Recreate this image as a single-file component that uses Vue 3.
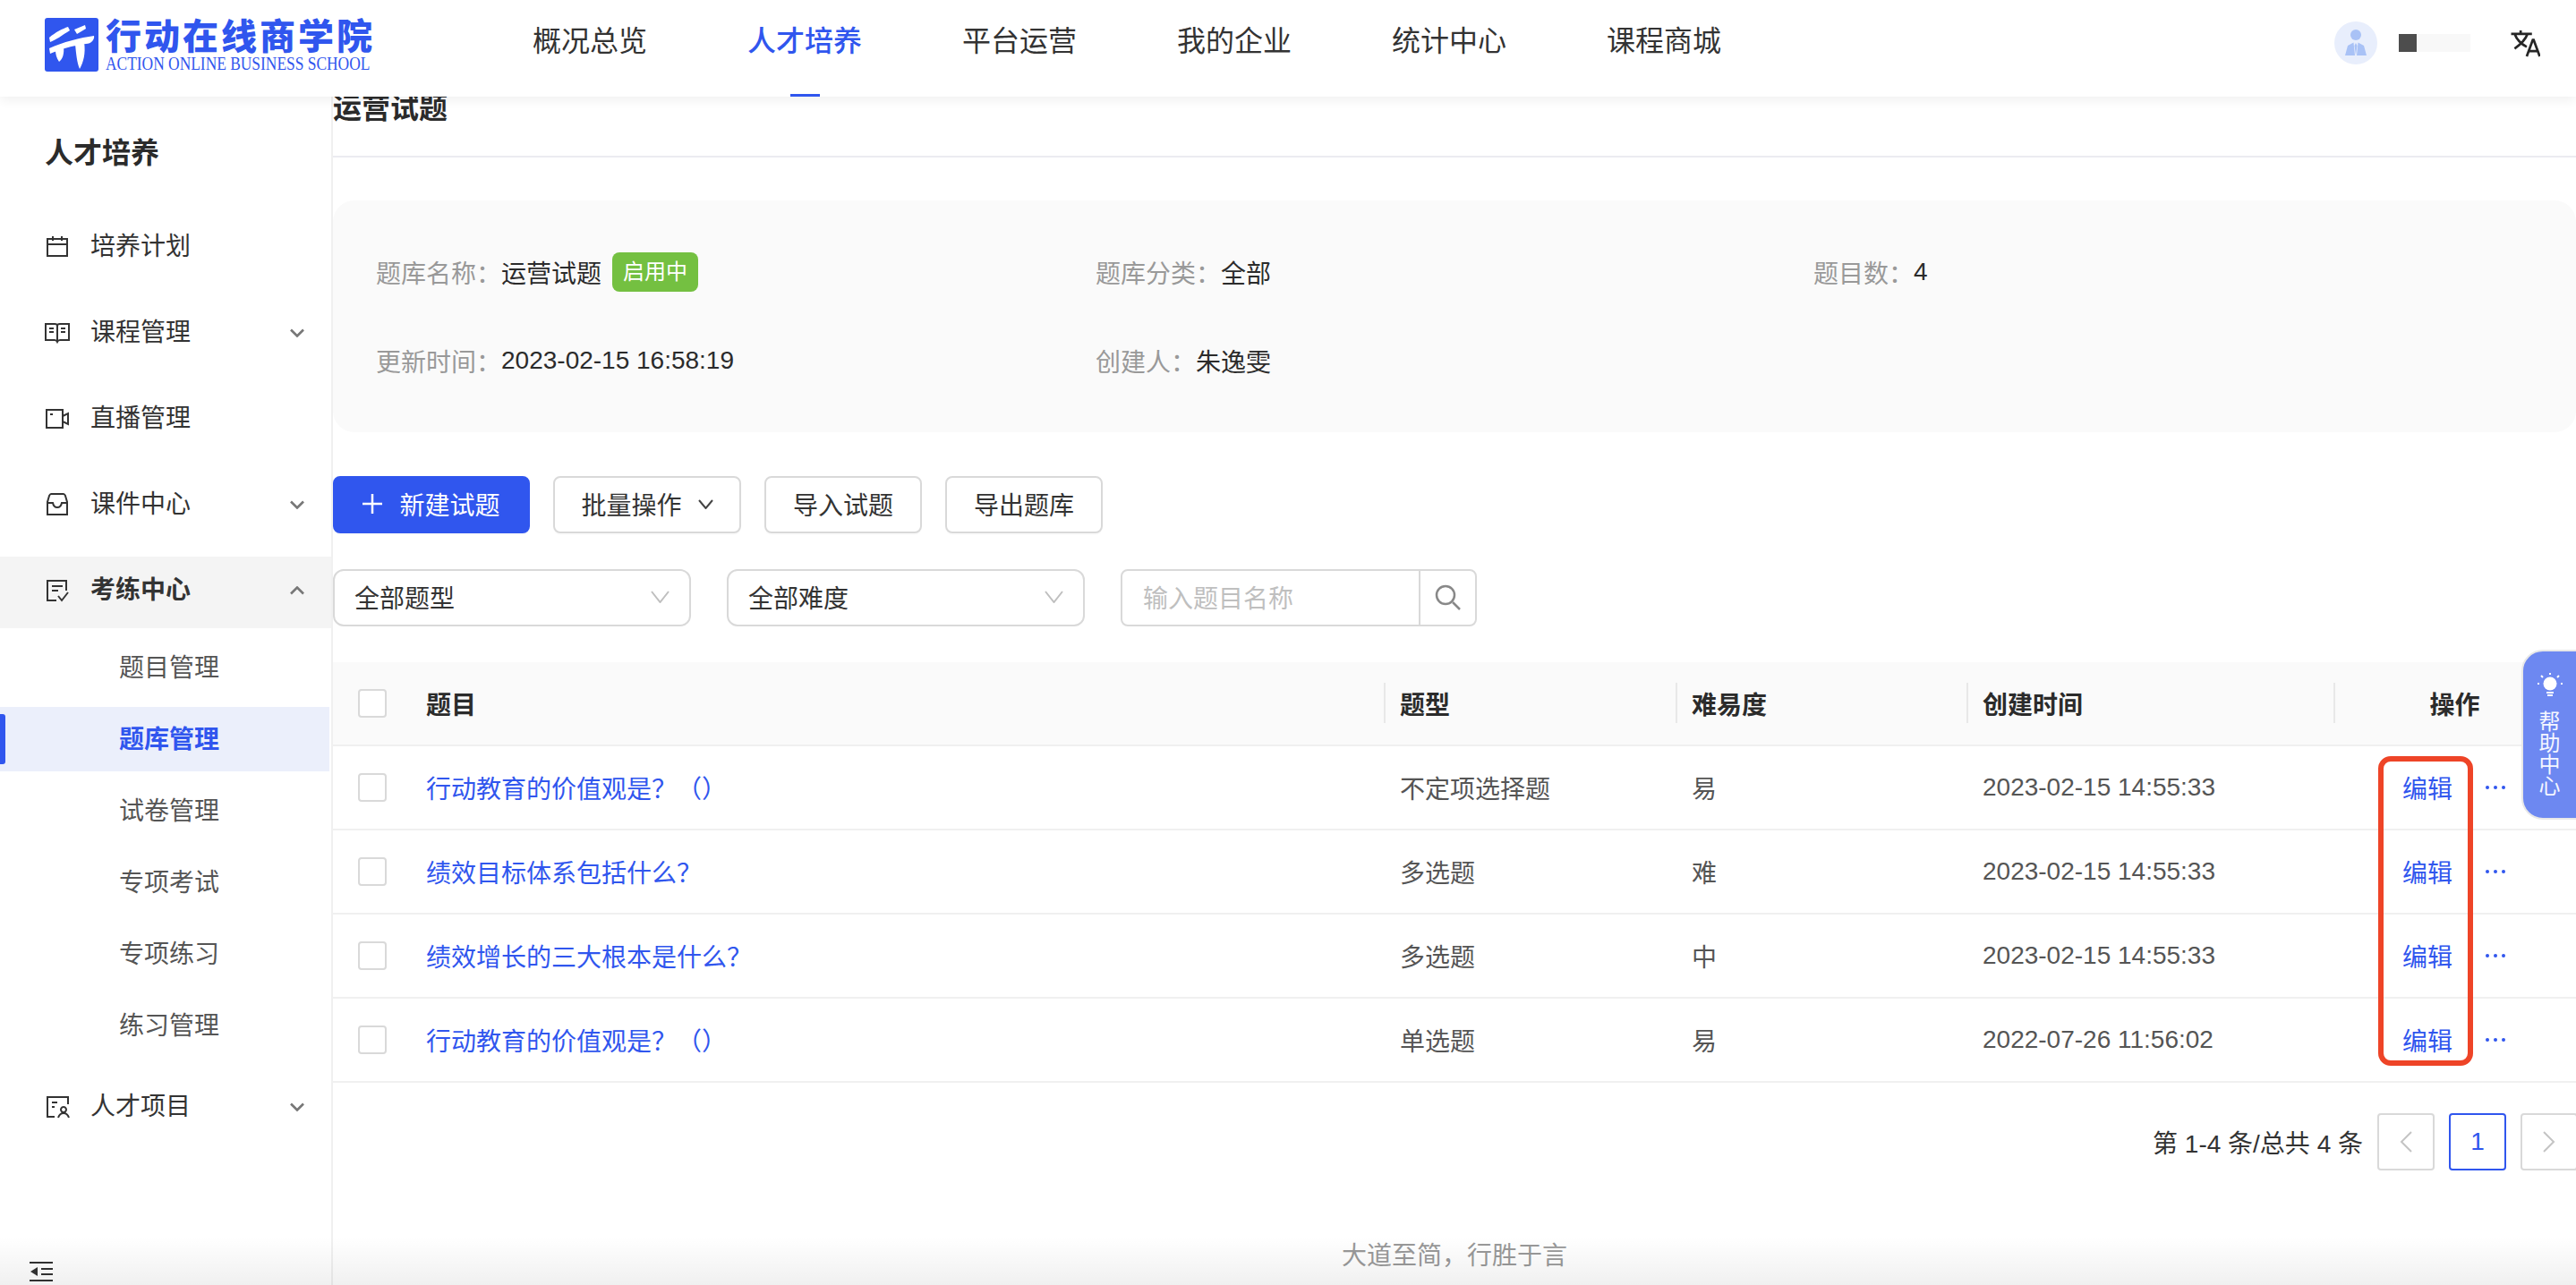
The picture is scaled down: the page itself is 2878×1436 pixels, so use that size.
<script setup>
const navItems = ['概况总览', '人才培养', '平台运营', '我的企业', '统计中心', '课程商城']

const icons = {
  calendar: 'M3 5h22v19H3zM3 11h22M9 2v5M19 2v5',
  book: 'M1 4h10q3 0 3 2q0-2 3-2h10v18H17q-2 0-3 2q-1-2-3-2H1zM14 6v17M5 9h5M5 13h5M18 9h5M18 13h5',
  video: 'M2 4h18v20H2zM20 11l6-3v12l-6-3M6 9h3',
  inbox: 'M7 2h14q1 0 2 2l2 7v14H3V11l2-7q1-2 2-2zM3 12h6q1 5 5 5t5-5h6',
  exam: 'M24 14V3H3v22h10M8 9h12M8 14h7M15 20l4 5 7-9',
  project: 'M26 11V3H3v22h8M8 9h6M8 14h3M15 26c1-3 3-5 6-5s5 2 6 5M21 14a3 3 0 1 0 .01 0z'
}

const menuTop = [
  { label: '培养计划', icon: 'calendar' },
  { label: '课程管理', icon: 'book', arrow: 'down' },
  { label: '直播管理', icon: 'video' },
  { label: '课件中心', icon: 'inbox', arrow: 'down' }
]
const subMenu = ['题目管理', '题库管理', '试卷管理', '专项考试', '专项练习', '练习管理']

const rows = [
  { title: '行动教育的价值观是？（）', type: '不定项选择题', level: '易', time: '2023-02-15 14:55:33' },
  { title: '绩效目标体系包括什么？', type: '多选题', level: '难', time: '2023-02-15 14:55:33' },
  { title: '绩效增长的三大根本是什么？', type: '多选题', level: '中', time: '2023-02-15 14:55:33' },
  { title: '行动教育的价值观是？（）', type: '单选题', level: '易', time: '2022-07-26 11:56:02' }
]
</script>

<template>
  <div class="page">
    <header class="header">
      <div class="logo">
        <svg class="logo-mark" viewBox="0 0 60 60">
          <rect width="60" height="60" rx="3" fill="#3056ee" />
          <path fill="#fff" d="M5 22C12 16 20 12 26 10L28 14C20 19 12 25 6 27ZM33 13L45 8L46 12L36 18ZM5 34C20 27 40 22 55 20C56 24 52 29 46 29C30 31 15 36 6 40ZM12 36L21 32C22 40 20 46 16 49C13 45 12 40 12 36ZM34 29L44 27C46 40 43 50 39 57C36 50 35 40 34 29Z" />
        </svg>
        <div class="logo-text">
          <div class="logo-cn">行动在线商学院</div>
          <div class="logo-en">ACTION ONLINE BUSINESS SCHOOL</div>
        </div>
      </div>
      <nav class="nav">
        <a v-for="item in navItems" :key="item" class="nav-item" :class="{ active: item === '人才培养' }">{{ item }}</a>
      </nav>
      <div class="user">
        <svg class="avatar" viewBox="0 0 48 48">
          <circle cx="24" cy="24" r="24" fill="#e8eefc" />
          <circle cx="24" cy="15" r="6" fill="#a9c2f6" />
          <path fill="#a9c2f6" d="M12 38L15 27L21.500 23.500L23 38ZM36 38L33 27L26.500 23.500L25 38Z" />
          <path fill="#a9c2f6" d="M24 24l1.500 3-1.500 11-1.500-11z" />
        </svg>
        <div class="name"><span class="name-mask"></span></div>
        <svg class="lang" viewBox="1 0 33 32">
          <path class="lang-line" d="M1 5h24M12 1v4M5 5c3 8 8 12 14 15M20 5c-3 8-9 13-15 17M19 31l7-19h1l7 19M21.500 25h10" />
        </svg>
      </div>
    </header>

    <div class="body">
      <aside class="side">
        <h2 class="side-title">人才培养</h2>
        <div v-for="item in menuTop" :key="item.label" class="menu-item">
          <svg class="menu-icon" viewBox="0 0 28 28"><path :d="icons[item.icon]" /></svg>
          <span class="menu-label">{{ item.label }}</span>
          <svg v-if="item.arrow" class="menu-arrow" viewBox="0 0 16 10"><path d="M1 1.500l7 7 7-7" /></svg>
        </div>
        <div class="menu-item open">
          <svg class="menu-icon" viewBox="0 0 28 28"><path :d="icons.exam" /></svg>
          <span class="menu-label">考练中心</span>
          <svg class="menu-arrow" viewBox="0 0 16 10"><path d="M1 8.500l7-7 7 7" /></svg>
        </div>
        <div class="sub-list">
          <div v-for="item in subMenu" :key="item" class="sub-item" :class="{ active: item === '题库管理' }">{{ item }}</div>
        </div>
        <div class="menu-item last">
          <svg class="menu-icon" viewBox="0 0 28 28"><path :d="icons.project" /></svg>
          <span class="menu-label">人才项目</span>
          <svg class="menu-arrow" viewBox="0 0 16 10"><path d="M1 1.500l7 7 7-7" /></svg>
        </div>
        <svg class="collapse" viewBox="0 0 26 24">
          <path class="collapse-line" d="M0 2h26M13 9h13M13 15h13M0 22h26" />
          <path class="collapse-tri" d="M9 7v10l-8-5z" />
        </svg>
      </aside>

      <main class="main">
        <h1 class="title">运营试题</h1>

        <section class="info">
          <div class="info-cell">
            <span class="info-label">题库名称：</span><span>运营试题</span><span class="tag">启用中</span>
          </div>
          <div class="info-cell"><span class="info-label">题库分类：</span><span>全部</span></div>
          <div class="info-cell"><span class="info-label">题目数：</span><span>4</span></div>
          <div class="info-cell"><span class="info-label">更新时间：</span><span>2023-02-15 16:58:19</span></div>
          <div class="info-cell"><span class="info-label">创建人：</span><span>朱逸雯</span></div>
        </section>

        <div class="actions">
          <button class="btn primary">
            <svg class="plus" viewBox="0 0 22 22"><path d="M11 0v22M0 11h22" /></svg>
            <span>新建试题</span>
          </button>
          <button class="btn batch">
            <span>批量操作</span>
            <svg class="btn-arrow" viewBox="0 0 17 11"><path d="M1 1l7.500 9L16 1" /></svg>
          </button>
          <button class="btn">导入试题</button>
          <button class="btn">导出题库</button>
        </div>

        <div class="filters">
          <div class="select">
            <span>全部题型</span>
            <svg class="select-arrow" viewBox="0 0 21 14"><path d="M1 1l9.500 12L20 1" /></svg>
          </div>
          <div class="select">
            <span>全部难度</span>
            <svg class="select-arrow" viewBox="0 0 21 14"><path d="M1 1l9.500 12L20 1" /></svg>
          </div>
          <div class="search">
            <span class="search-input">输入题目名称</span>
            <span class="search-btn">
              <svg class="search-icon" viewBox="0 0 30 30"><path d="M24 25 L16 17" transform="translate(4 3)" /><circle cx="12" cy="12" r="10" /></svg>
            </span>
          </div>
        </div>

        <div class="table">
          <div class="tr th">
            <div class="cell"><span class="check"></span></div>
            <div class="cell">题目</div>
            <div class="cell sep">题型</div>
            <div class="cell sep wide">难易度</div>
            <div class="cell sep">创建时间</div>
            <div class="cell sep zero center">操作</div>
          </div>
          <div v-for="(row, i) in rows" :key="i" class="tr">
            <div class="cell"><span class="check"></span></div>
            <div class="cell link">{{ row.title }}</div>
            <div class="cell muted">{{ row.type }}</div>
            <div class="cell muted">{{ row.level }}</div>
            <div class="cell muted">{{ row.time }}</div>
            <div class="cell ops">
              <span class="link">编辑</span>
              <span class="dots"><i></i><i></i><i></i></span>
            </div>
          </div>
          <div class="mark"></div>
        </div>

        <div class="pager">
          <span class="pager-text">第 1-4 条/总共 4 条</span>
          <span class="page-btn"><svg viewBox="0 0 14 24"><path d="M13 1L2 12l11 11" /></svg></span>
          <span class="page-btn current">1</span>
          <span class="page-btn"><svg viewBox="0 0 14 24"><path d="M1 1l11 11L1 23" /></svg></span>
        </div>

        <footer class="foot">大道至简，行胜于言</footer>
      </main>
    </div>

    <div class="help">
      <svg class="bulb" viewBox="0 0 28 30">
        <circle class="bulb-core" cx="14" cy="12" r="7.500" />
        <path class="bulb-line" d="M10 22h8M11 25h6M14 0v2M4 3l2 2M24 3l-2 2M0 12h2M26 12h2" />
      </svg>
      <span class="help-text">帮助中心</span>
    </div>
    <div class="fade"></div>
  </div>
</template>

<style>
html, body { margin: 0; padding: 0; background: #fff; }
</style>

<style scoped>
.page {
  position: relative;
  width: 2878px;
  height: 1436px;
  overflow: hidden;
  background: #fff;
  color: #333;
  font-family: "Liberation Sans", "Noto Sans CJK SC", sans-serif;
  font-size: 28px;
}

.header {
  position: relative;
  z-index: 5;
  display: flex;
  align-items: center;
  box-sizing: border-box;
  height: 108px;
  padding: 0 40px 12px 50px;
  background: #fff;
  box-shadow: 0 3px 12px rgba(0, 0, 0, 0.07);
}
.logo { display: flex; gap: 8px; margin-top: 4px; }
.logo-mark { display: block; width: 60px; height: 60px; }
.logo-text { width: 298px; white-space: nowrap; }
.logo-cn {
  font-size: 40px;
  line-height: 42px;
  letter-spacing: 3px;
  font-weight: 900;
  color: #3056ee;
}
.logo-en {
  margin-top: -1px;
  font-family: "Liberation Serif", serif;
  font-size: 20px;
  line-height: 20px;
  color: #3056ee;
  transform: scaleX(0.87);
  transform-origin: left center;
}
.nav { display: flex; gap: 112px; margin: -4px 0 0 179px; }
.nav-item { position: relative; font-size: 32px; line-height: 44px; color: #333; }
.nav-item.active { color: #3056ee; font-weight: 500; }
.nav-item.active::after {
  content: "";
  position: absolute;
  left: 48px;
  top: 81px;
  width: 33px;
  height: 3px;
  background: #3056ee;
}
.user { display: flex; align-items: center; margin-left: auto; }
.avatar { width: 48px; height: 48px; }
.name { width: 80px; height: 20px; margin: 0 45px 0 24px; background: #f8f8f8; }
.name-mask { display: block; width: 20px; height: 20px; background: #4d4d4d; }
.lang { width: 33px; height: 31px; }
.lang-line { fill: none; stroke: #262626; stroke-width: 2.800; }

.body { display: flex; height: 1328px; }
.side {
  display: flex;
  flex-direction: column;
  flex: none;
  box-sizing: border-box;
  width: 372px;
  height: 1328px;
  border-right: 2px solid #f0f0f0;
}
.side-title {
  margin: 0;
  padding: 43px 0 45px 50px;
  font-size: 32px;
  line-height: 40px;
  font-weight: 700;
  color: #2b2b2b;
}
.menu-item {
  display: flex;
  align-items: center;
  flex: none;
  box-sizing: border-box;
  height: 80px;
  margin-bottom: 16px;
  padding: 0 30px 0 50px;
  color: #333;
}
.menu-item.open {
  margin: 2px 0 0;
  padding-bottom: 5px;
  background: #f4f4f4;
  font-weight: 700;
}
.menu-item.last { margin: 15px 0 0; }
.menu-icon { flex: none; width: 28px; height: 28px; margin-right: 23px; }
.menu-icon path { fill: none; stroke: #333; stroke-width: 2; }
.menu-label { flex: 1; line-height: 40px; }
.menu-arrow { flex: none; width: 16px; height: 10px; }
.menu-arrow path { fill: none; stroke: #777; stroke-width: 2.600; }
.sub-list { display: flex; flex-direction: column; gap: 8px; margin-top: 8px; }
.sub-item {
  position: relative;
  box-sizing: border-box;
  width: 368px;
  height: 72px;
  padding-left: 133px;
  line-height: 73px;
  color: #555;
}
.sub-item.active { background: #ebeffb; color: #3056ee; font-weight: 700; }
.sub-item.active::before {
  content: "";
  position: absolute;
  left: 0;
  top: 8px;
  width: 6px;
  height: 56px;
  border-radius: 0 3px 3px 0;
  background: #3056ee;
}
.collapse { flex: none; width: 26px; height: 24px; margin: auto 0 3px 33px; }
.collapse-line { fill: none; stroke: #333; stroke-width: 2.200; }
.collapse-tri { fill: #333; }

.main { flex: 1; min-width: 0; }
.title {
  box-sizing: border-box;
  height: 71px;
  margin: -3px 0 0;
  border-bottom: 2px solid #ebebf1;
  font-size: 32px;
  line-height: 32px;
  font-weight: 700;
  color: #2b2b2b;
}
.info {
  display: grid;
  grid-template-columns: 804px 802px 802px;
  align-content: start;
  row-gap: 55px;
  box-sizing: border-box;
  height: 259px;
  margin-top: 48px;
  padding: 58px 0 0 48px;
  border-radius: 24px;
  background: #fafafa;
}
.info-cell { display: flex; align-items: center; height: 44px; color: #2b2b2b; white-space: nowrap; }
.info-label { color: #999; }
.tag {
  margin-left: 12px;
  padding: 0 12px;
  border-radius: 8px;
  background: #74c041;
  color: #fff;
  font-size: 24px;
  line-height: 44px;
}

.actions { display: flex; gap: 26px; margin-top: 49px; }
.btn {
  display: flex;
  align-items: center;
  justify-content: center;
  box-sizing: border-box;
  width: 176px;
  height: 64px;
  padding: 0 0 2px;
  border: 2px solid #d9d9d9;
  border-radius: 8px;
  background: #fff;
  box-shadow: 0 2px 0 rgba(0, 0, 0, 0.015);
  color: #333;
  font-family: inherit;
  font-size: 28px;
}
.btn.primary { gap: 19px; width: 220px; border-color: #3056ee; background: #3056ee; color: #fff; }
.plus { width: 22px; height: 22px; }
.plus path { fill: none; stroke: #fff; stroke-width: 2.500; }
.btn.batch { gap: 18px; width: 210px; }
.btn-arrow { width: 17px; height: 11px; }
.btn-arrow path { fill: none; stroke: #444; stroke-width: 2; }

.filters { display: flex; gap: 40px; margin-top: 40px; }
.select, .search {
  display: flex;
  align-items: center;
  box-sizing: border-box;
  height: 64px;
  border: 2px solid #d9d9d9;
  border-radius: 12px;
}
.select { justify-content: space-between; width: 400px; padding: 0 22px 2px; }
.select-arrow { width: 21px; height: 14px; }
.select-arrow path { fill: none; stroke: #bfbfbf; stroke-width: 2; }
.search { width: 398px; border-radius: 8px; }
.search-input { flex: 1; padding: 0 0 2px 23px; color: #bfbfbf; }
.search-btn {
  display: flex;
  align-items: center;
  justify-content: center;
  width: 61px;
  height: 100%;
  border-left: 2px solid #d9d9d9;
}
.search-icon { width: 30px; height: 30px; }
.search-icon path, .search-icon circle { fill: none; stroke: #888; stroke-width: 2.500; }

.table { position: relative; margin-top: 40px; }
.tr {
  display: grid;
  grid-template-columns: 104px 1088px 326px 325px 392px 271px;
  align-items: center;
  box-sizing: border-box;
  height: 94px;
  border-bottom: 2px solid #f0f0f0;
}
.th { background: #fafafa; font-weight: 700; color: #2b2b2b; }
.cell { position: relative; white-space: nowrap; }
.sep::before {
  content: "";
  position: absolute;
  left: -18px;
  top: -3px;
  width: 2px;
  height: 45px;
  background: #e8e8e8;
}
.sep.zero::before { left: 0; }
.center { text-align: center; }
.check {
  display: block;
  box-sizing: border-box;
  width: 32px;
  height: 32px;
  margin-left: 28px;
  border: 2px solid #d9d9d9;
  border-radius: 4px;
  background: #fff;
}
.link { color: #3056ee; }
.muted { color: #555; }
.ops { display: flex; align-items: center; padding-left: 77px; }
.dots { display: flex; gap: 5px; margin-left: 37px; }
.dots i { display: block; width: 4px; height: 4px; border-radius: 50%; background: #3056ee; }
.mark {
  position: absolute;
  left: 2285px;
  top: 105px;
  box-sizing: border-box;
  width: 106px;
  height: 346px;
  border: 6px solid #ee4427;
  border-radius: 14px;
}

.pager { display: flex; align-items: center; justify-content: flex-end; gap: 16px; margin: 34px -2px 0 0; }
.pager-text { margin-right: 0; color: #333; }
.page-btn {
  display: flex;
  align-items: center;
  justify-content: center;
  box-sizing: border-box;
  width: 64px;
  height: 64px;
  border: 2px solid #d9d9d9;
  border-radius: 4px;
}
.page-btn svg { width: 14px; height: 24px; }
.page-btn path { fill: none; stroke: #c4c4c4; stroke-width: 2; }
.page-btn.current { border-color: #3056ee; color: #3056ee; }

.foot { margin-top: 80px; color: #999; line-height: 32px; text-align: center; }

.help {
  position: absolute;
  right: -2px;
  top: 726px;
  z-index: 3;
  display: flex;
  flex-direction: column;
  align-items: center;
  box-sizing: border-box;
  width: 63px;
  height: 190px;
  padding: 24px 0 0 0;
  border: 2px solid #e8e8e8;
  border-radius: 24px 0 0 24px;
  background: #6d88f1;
}
.bulb { width: 28px; height: 30px; }
.bulb-core { fill: #fff; }
.bulb-line { fill: none; stroke: #fff; stroke-width: 2; }
.help-text { width: 24px; margin-top: 13px; color: #f4f6ff; font-size: 24px; line-height: 24px; }

.fade {
  position: absolute;
  left: 0;
  right: 0;
  bottom: 0;
  z-index: 4;
  height: 54px;
  background: linear-gradient(rgba(0, 0, 0, 0), rgba(0, 0, 0, 0.06));
  pointer-events: none;
}
</style>
